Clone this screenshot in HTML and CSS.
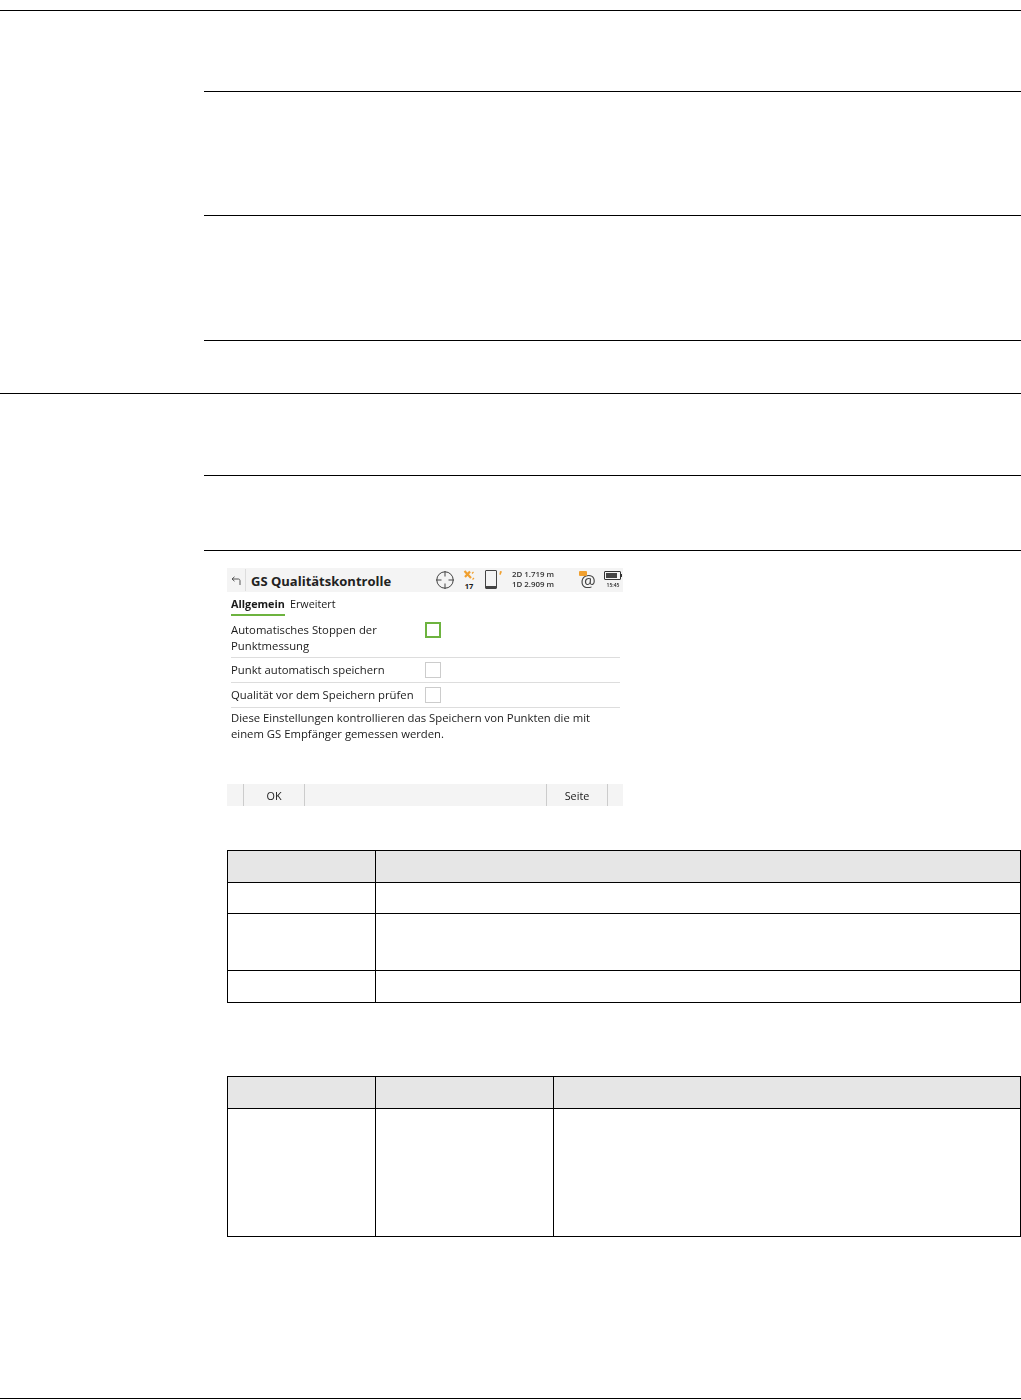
FILE: index.html
```html
<!DOCTYPE html>
<html lang="de">
<head>
    <meta charset="UTF-8">
    <meta name="viewport" content="width=device-width, initial-scale=1.0">
    <title>GS Qualitätskontrolle</title>
    <link rel="stylesheet" href="styles.css">
</head>
<body>

    <section class="section">
        <div class="gap gap_80"></div>
        <div class="sub sub_a"></div>
        <div class="sub sub_b"></div>
        <div class="sub sub_c"></div>
    </section>

    <section class="section">
        <div class="gap gap_81"></div>
        <div class="sub sub_d"></div>
        <div class="sub sub_e">

            <div class="screen">
                <div class="title_bar">
                    <svg class="back" width="10" height="10" viewBox="0 0 10 10">
                        <path d="M3.5 .8 1 3l2.500 2.200M1 3h6.500c1 0 1.500 .8 1.500 1.800V9" fill="none" stroke="#555" stroke-width="1"/>
                    </svg>
                    <span class="title_sep"></span>
                    <span class="title">GS Qualitätskontrolle</span>
                    <svg class="st_cross" width="20" height="20" viewBox="0 0 20 20">
                        <circle cx="10" cy="10" r="8.200" fill="none" stroke="#444" stroke-width="1"/>
                        <path d="M10 1V6.500M10 13.500V19M1 10H6.500M13.500 10H19" stroke="#444" stroke-width="1"/>
                    </svg>
                    <div class="st_sat">
                        <svg width="12" height="11" viewBox="0 0 12 11">
                            <path d="M1.500 1 8 8M7 1.500 2 7" stroke="#f0a030" stroke-width="2.200" fill="none"/>
                            <path d="M9 3.500 10.500 2M9.500 9.500 11 8" stroke="#f0a030" stroke-width="1.200"/>
                        </svg>
                        <span>17</span>
                    </div>
                    <svg class="st_phone" width="18" height="20" viewBox="0 0 18 20">
                        <rect x=".5" y=".5" width="11" height="18" rx=".5" fill="none" stroke="#444" stroke-width="1"/>
                        <rect x="1" y="16" width="10" height="3" fill="#444"/>
                        <path d="M15 1l2 .5-1.500 3.500-1.200-.5z" fill="#f0a030"/>
                    </svg>
                    <div class="st_acc">
                        <span>2D 1.719 m</span>
                        <span>1D 2.909 m</span>
                    </div>
                    <div class="st_mail">
                        <span class="at">@</span>
                        <span class="env"></span>
                    </div>
                    <div class="st_batt">
                        <span class="batt"><span class="batt_fill"></span></span>
                        <span class="clock">15:45</span>
                    </div>
                </div>

                <div class="tabs">
                    <span class="tab tab_on">Allgemein</span>
                    <span class="tab">Erweitert</span>
                </div>

                <div class="row row_tall">
                    <span>Automatisches Stoppen der Punktmessung</span>
                    <span class="check check_on"></span>
                </div>
                <div class="row">
                    <span>Punkt automatisch speichern</span>
                    <span class="check"></span>
                </div>
                <div class="row">
                    <span>Qualität vor dem Speichern prüfen</span>
                    <span class="check"></span>
                </div>
                <p class="note">Diese Einstellungen kontrollieren das Speichern von Punkten die mit einem GS Empfänger gemessen werden.</p>

                <div class="keys">
                    <span class="key">OK</span>
                    <span class="key_space"></span>
                    <span class="key">Seite</span>
                </div>
            </div>

            <table class="tbl tbl_first">
                <tr class="head"><th class="c1"></th><th></th></tr>
                <tr class="h31"><td></td><td></td></tr>
                <tr class="h57"><td></td><td></td></tr>
                <tr class="h32"><td></td><td></td></tr>
            </table>

            <table class="tbl tbl_second">
                <tr class="head"><th class="c1"></th><th class="c2"></th><th></th></tr>
                <tr class="h128"><td></td><td></td><td></td></tr>
            </table>
        </div>
    </section>

    <div class="foot_rule"></div>

</body>
</html>
```

FILE: styles.css
```css
* {
    margin: 0px;
    padding: 0px;
    box-sizing: border-box;
}

body {
    width: 1021px;
    height: 1400px;
    padding-top: 10px;
    background-color: #fff;
    font-family: "Open Sans", Arial, sans-serif;
    color: #1a1a1a;
    overflow: hidden;
}

.section {
    border-top: 1px solid #000;
}

.gap_80 {
    height: 80px;
}

.gap_81 {
    height: 81px;
}

.sub {
    margin-left: 204px;
    border-top: 1px solid #000;
}

.sub_a {
    height: 124px;
}

.sub_b {
    height: 125px;
}

.sub_c {
    height: 53px;
}

.sub_d {
    height: 75px;
}

.sub_e {
    padding: 17px 0 0 23px;
}

/* instrument screenshot */
.screen {
    width: 396px;
    height: 238px;
    display: flex;
    flex-direction: column;
    font-size: 11.300px;
    line-height: 16px;
    filter: blur(0.4px);
}

.title_bar {
    height: 24px;
    background-color: #f4f4f4;
    display: flex;
    align-items: center;
    padding-left: 4px;
    flex-shrink: 0;
}

.back {
    margin-top: 1px;
}

.title_sep {
    width: 1px;
    height: 22px;
    margin-left: 4px;
    background-color: #ddd;
}

.title {
    width: 182px;
    margin: 2px 0 0 5px;
    font-size: 13px;
    font-weight: 700;
    color: #222;
}

.st_cross {
    margin-left: 2px;
}

.st_sat {
    width: 12px;
    margin-left: 8px;
    display: flex;
    flex-direction: column;
    align-items: center;
    font-size: 7.500px;
    font-weight: 700;
    line-height: 8px;
}

.st_sat span {
    margin-top: 1px;
}

.st_phone {
    margin-left: 10px;
}

.st_acc {
    width: 60px;
    margin: -1px 0 0 9px;
    display: flex;
    flex-direction: column;
    font-size: 7.900px;
    font-weight: 600;
    line-height: 9.500px;
    color: #333;
}

.st_mail {
    position: relative;
    width: 18px;
    height: 20px;
    margin-left: 7px;
    text-align: center;
    font-size: 17px;
    line-height: 22px;
    color: #444;
}

.env {
    position: absolute;
    left: 0;
    top: 1px;
    width: 8px;
    height: 5px;
    border-radius: 1px;
    background-color: #f0a030;
}

.st_batt {
    width: 20px;
    margin-left: 6px;
    display: flex;
    flex-direction: column;
    align-items: center;
    font-size: 5px;
    font-weight: 600;
    line-height: 7px;
}

.batt {
    position: relative;
    display: block;
    width: 17px;
    height: 9px;
    margin-right: 1px;
    border: 1px solid #333;
    border-radius: 1px;
    padding: 1px;
    margin-bottom: 2px;
}

.batt::after {
    content: "";
    position: absolute;
    right: -2px;
    top: 2px;
    width: 1px;
    height: 3px;
    background-color: #333;
}

.batt_fill {
    display: block;
    width: 11px;
    height: 5px;
    background-color: #444;
}

.tabs {
    display: flex;
    gap: 5px;
    padding: 5px 0 0 4px;
    height: 30px;
    font-size: 10.800px;
    line-height: 14px;
    flex-shrink: 0;
}

.tab {
    height: 19px;
}

.tab_on {
    font-weight: 700;
    border-bottom: 2px solid #6db33f;
}

.row {
    display: flex;
    align-items: center;
    justify-content: flex-start;
    height: 25px;
    margin: 0 3px 0 4px;
    border-bottom: 1px solid #ddd;
    flex-shrink: 0;
}

.row > span:first-child {
    width: 194px;
    flex-shrink: 0;
}

.row_tall {
    height: 36px;
    align-items: flex-start;
}

.check {
    width: 16px;
    height: 16px;
    background-color: #fff;
    border: 1px solid #ccc;
}

.check_on {
    border: 2px solid #6db33f;
}

.note {
    margin: 2px 20px 0 4px;
}

.keys {
    margin-top: auto;
    height: 22px;
    padding: 0 15px 0 16px;
    background-color: #f4f4f4;
    display: flex;
    flex-shrink: 0;
}

.key {
    width: 62px;
    line-height: 24px;
    text-align: center;
    font-size: 10.800px;
    border-left: 1px solid #ccc;
    border-right: 1px solid #ccc;
}

.key_space {
    flex: 1;
}

/* tables */
.tbl {
    width: 794px;
    border-collapse: collapse;
    table-layout: fixed;
}

.tbl th, .tbl td {
    border: 1px solid #000;
}

.tbl_first {
    margin-top: 44px;
}

.tbl_second {
    margin-top: 73px;
}

.head {
    height: 32px;
}

.head th {
    background-color: #e6e6e6;
}

.c1 {
    width: 148px;
}

.c2 {
    width: 178px;
}

.h31 {
    height: 31px;
}

.h32 {
    height: 32px;
}

.h57 {
    height: 57px;
}

.h128 {
    height: 128px;
}

.foot_rule {
    position: absolute;
    left: 0;
    right: 0;
    top: 1398px;
    width: 1021px;
    border-top: 1px solid #000;
}
```
